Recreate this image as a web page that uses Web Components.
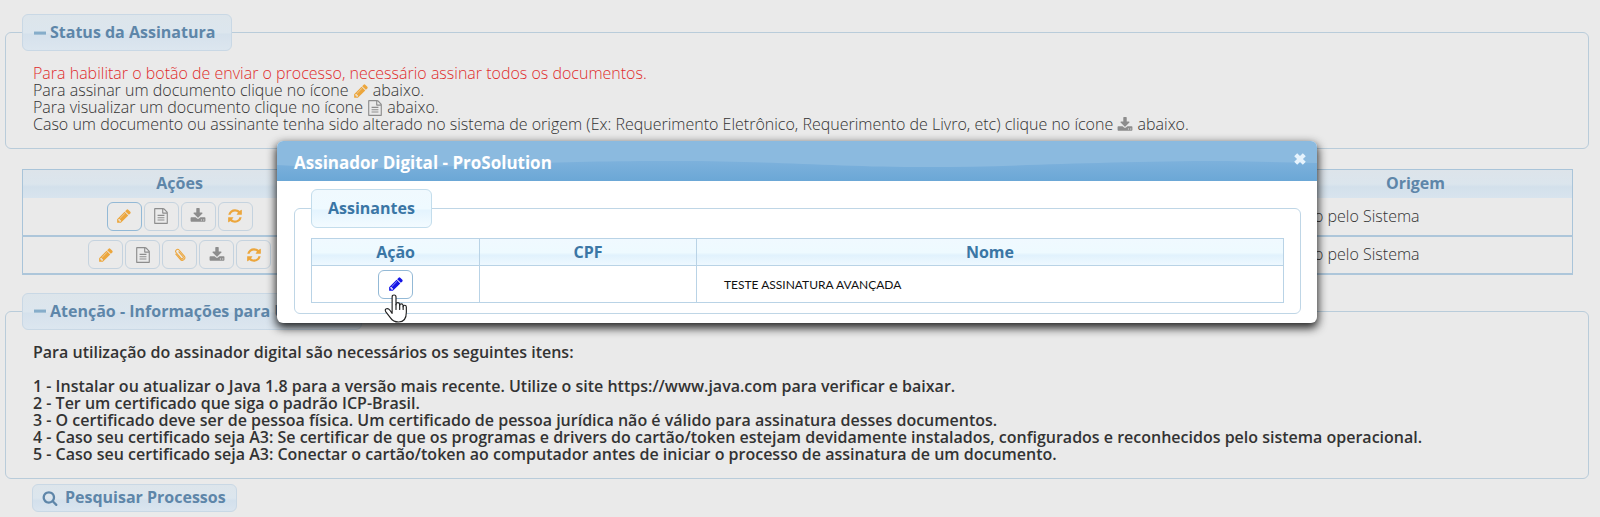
<!DOCTYPE html>
<html lang="pt-BR">
<head>
<meta charset="utf-8">
<title>Assinador Digital</title>
<style>
	body {
		margin: 0;
		background-color: #eaeaea;
		color: #333;
		font: 300 16px/17px "Open Sans", sans-serif;
	}
</style>
</head>
<body>
<signature-page></signature-page>

<script>
const icons = {
	pencil: '<path d="M491 1536l91-91-235-235-91 91v107h128v128h107zM1014 608q0-22-22-22-10 0-17 7l-542 542q-7 7-7 17 0 22 22 22 10 0 17-7l542-542q7-7 7-17zM960 416l416 416-832 832h-416v-416zM1643 512q0 53-37 90l-166 166-416-416 166-165q36-38 90-38 53 0 91 38l235 234q37 39 37 91z"/>',
	file: '<path d="M1596 380q28 28 48 76t20 88v1152q0 40-28 68t-68 28h-1344q-40 0-68-28t-28-68v-1600q0-40 28-68t68-28h896q40 0 88 20t76 48zm-444-244v376h376q-10-29-22-41l-313-313q-12-12-41-22zm384 1528v-1024h-416q-40 0-68-28t-28-68v-416h-768v1536h1280zM512 768h768v128h-768zM512 1024h768v128h-768zM512 1280h768v128h-768z"/>',
	download: '<path d="M1344 1344q0-26-19-45t-45-19-45 19-19 45 19 45 45 19 45-19 19-45zm256 0q0-26-19-45t-45-19-45 19-19 45 19 45 45 19 45-19 19-45zm128-224v320q0 40-28 68t-68 28h-1472q-40 0-68-28t-28-68v-320q0-40 28-68t68-28h465l135 136q58 56 136 56t136-56l136-136h464q40 0 68 28t28 68zm-325-569q17 41-14 70l-448 448q-18 19-45 19t-45-19l-448-448q-31-29-14-70 17-39 59-39h256v-448q0-26 19-45t45-19h256q26 0 45 19t19 45v448h256q42 0 59 39z"/>',
	refresh: '<path d="M1639 1056q0 5-1 7-64 268-268 434.500t-478 166.500q-146 0-282.500-55t-243.500-157l-129 129q-19 19-45 19t-45-19-19-45v-448q0-26 19-45t45-19h448q26 0 45 19t19 45-19 45l-137 137q71 66 161 102t187 36q134 0 250-65t186-179q11-17 53-117 8-23 30-23h192q13 0 22.500 9.500t9.500 22.500zm25-800v448q0 26-19 45t-45 19h-448q-26 0-45-19t-19-45 19-45l138-138q-148-137-349-137-134 0-250 65t-186 179q-11 17-53 117-8 23-30 23h-199q-13 0-22.500-9.500t-9.500-22.500v-7q65-268 270-434.500t480-166.500q146 0 284 55.500t245 156.500l130-129q19-19 45-19t45 19 19 45z"/>',
	search: '<path d="M1216 832q0-185-131.500-316.500t-316.500-131.500-316.500 131.500-131.500 316.500 131.500 316.500 316.500 131.500 316.500-131.500 131.500-316.500zm512 832q0 52-38 90t-90 38q-54 0-90-38l-343-342q-179 124-399 124-143 0-273.500-55.500t-225-150-150-225-55.500-273.500 55.500-273.500 150-225 225-150 273.500-55.500 273.500 55.500 225 150 150 225 55.500 273.500q0 220-124 399l343 343q37 37 37 90z"/>',
	clip: '<g fill="none" stroke="currentColor" stroke-width="120" stroke-linecap="round" transform="rotate(-40 896 896)"><path d="M600 520v780a290 270 0 0 0 580 0v-900a220 210 0 0 0-440 0v860a145 140 0 0 0 290 0v-720"/></g>',
	minus: '<path d="M0 680h1792v460h-1792z"/>',
	close: '<path d="M580 250L896 566l316-316 330 330-316 316 316 316-330 330-316-316-316 316-330-330 316-316-316-316z"/>'
};

// Icon taken by name, sized and coloured by its user
class UiIcon extends HTMLElement {
	connectedCallback() {
		const shadowRoot = this.attachShadow({ mode: 'open' });
		shadowRoot.innerHTML = `
<style>
	:host {
		display: inline-block;
		width: 16px;
		height: 16px;
		vertical-align: -3px;
	}
	:host([tone="orange"]) { color: #eca63c; }
	:host([tone="grey"]) { color: #8d8d8d; }
	:host([tone="blue"]) { color: #1414e6; }
	svg {
		display: block;
		width: 100%;
		height: 100%;
	}
</style>
<svg viewBox="0 0 1792 1792" fill="currentColor" aria-hidden="true">${icons[this.getAttribute('name')]}</svg>`;
	}
}

// Square button with a single icon in it
class IconButton extends HTMLElement {
	connectedCallback() {
		const shadowRoot = this.attachShadow({ mode: 'open' });
		shadowRoot.innerHTML = `
<style>
	:host { display: block; }
	button {
		display: flex;
		align-items: center;
		justify-content: center;
		box-sizing: border-box;
		width: 35px;
		height: 29px;
		padding: 0;
		border: 1px solid #c5d3df;
		border-radius: 6px;
		background: transparent;
		cursor: pointer;
	}
	:host([active]) button { border-color: #93b9d6; }
</style>
<button type="button" aria-label="${this.getAttribute('label')}">
	<ui-icon name="${this.getAttribute('icon')}" tone="${this.getAttribute('tone')}"></ui-icon>
</button>`;
	}
}

const panelTemplate = document.createElement('template');

panelTemplate.innerHTML = `
<style>
	:host { display: block; }
	fieldset {
		min-width: 0;
		margin: 0;
		padding: 0 16px;
		border: 1px solid var(--panel-border, #b9ccda);
		border-radius: 6px;
	}
	legend {
		display: flex;
		align-items: center;
		gap: 4px;
		padding: 9px 16px 9px 11px;
		border: 1px solid var(--legend-border, #c9d8e5);
		border-radius: 6px;
		background: var(--legend-fill, linear-gradient(#dde5eb, #dce6ee 50%, #d5e1ec 55%, #dce6ef));
		color: var(--heading, #5e86a9);
		font-weight: bold;
	}
	ui-icon {
		width: 12px;
		height: 12px;
		color: #86adca;
	}
	.content { padding: 14px 11px 15px; }
	:host([plain]) ui-icon { display: none; }
	:host([plain]) legend { padding: 10px 16px; }
	:host([plain]) .content { padding: 10px 0; }
</style>
<fieldset>
	<legend><ui-icon name="minus"></ui-icon><slot name="title"></slot></legend>
	<div class="content"><slot></slot></div>
</fieldset>
`;

class FieldPanel extends HTMLElement {
	connectedCallback() {
		const shadowRoot = this.attachShadow({ mode: 'open' });
		shadowRoot.appendChild(panelTemplate.content.cloneNode(true));
	}
}

class DocumentTable extends HTMLElement {
	connectedCallback() {
		const shadowRoot = this.attachShadow({ mode: 'open' });
		const sign = '<icon-button icon="pencil" tone="orange" label="Assinar"></icon-button>';
		const view = '<icon-button icon="file" tone="grey" label="Visualizar"></icon-button>';
		const attach = '<icon-button icon="clip" tone="orange" label="Anexos"></icon-button>';
		const rest = `<icon-button icon="download" tone="grey" label="Baixar"></icon-button>
			<icon-button icon="refresh" tone="orange" label="Atualizar"></icon-button>`;
		const row = (buttons) => `
	<tr>
		<td><div class="actions">${buttons}</div></td>
		<td></td><td></td><td></td>
		<td>Inserido pelo Sistema</td>
	</tr>`;

		shadowRoot.innerHTML = `
<style>
	:host { display: block; }
	table {
		width: 100%;
		table-layout: fixed;
		border-collapse: collapse;
		border: 1px solid #a9c4d9;
	}
	thead tr {
		height: 28px;
		background: linear-gradient(#dde4ea, #dbe5ed 50%, #d3e0eb 60%, #d8e4ee);
		color: #5e86a9;
	}
	th { padding: 0; }
	th:first-child, th:last-child { width: 20.2%; }
	tbody tr { height: 38px; }
	tbody td {
		padding: 0 6px;
		border-bottom: 2px solid #adc6da;
	}
	.actions {
		display: flex;
		justify-content: center;
		gap: 2px;
	}
</style>
<table>
	<thead>
		<tr><th>Ações</th><th></th><th></th><th></th><th>Origem</th></tr>
	</thead>
	<tbody>
		${row(sign.replace('<icon-button', '<icon-button active') + view + rest)}
		${row(sign + view + attach + rest)}
	</tbody>
</table>`;
	}
}

class SignerTable extends HTMLElement {
	connectedCallback() {
		const shadowRoot = this.attachShadow({ mode: 'open' });
		shadowRoot.innerHTML = `
<style>
	:host { display: block; }
	table {
		width: 100%;
		table-layout: fixed;
		border-collapse: collapse;
	}
	th, td {
		padding: 0;
		border: 1px solid #b9d3e6;
	}
	thead tr {
		height: 27px;
		background: linear-gradient(#f0f9ff, #eefaff 50%, #e1f2fd 60%, #eff9ff);
		color: #3a76a5;
	}
	th:nth-child(1) { width: 17.2%; }
	th:nth-child(2) { width: 22.2%; }
	tbody tr { height: 37px; }
	.action {
		position: relative;
		display: flex;
		justify-content: center;
	}
	.name {
		padding-left: 27px;
		color: #111;
		font: 12px/17px Lato, sans-serif;
	}
	/* Pointer lies over the button */
	.pointer {
		position: absolute;
		top: 24px;
		left: 50%;
		width: 24px;
		height: 29px;
		margin-left: -12px;
	}
</style>
<table>
	<thead>
		<tr><th>Ação</th><th>CPF</th><th>Nome</th></tr>
	</thead>
	<tbody>
		<tr>
			<td>
				<div class="action">
					<icon-button active icon="pencil" tone="blue" label="Assinar"></icon-button>
					<svg class="pointer" viewBox="0 0 24 30" fill="#fff" stroke="#222" stroke-width="1.200" stroke-linejoin="round" stroke-linecap="round" aria-hidden="true">
						<path d="M8 20V3q0-2 2-2t2 2v8q0-2 1.800-2t2 2v1q0-1.800 1.700-1.800t1.900 2v1q0-1.600 1.600-1.600t1.700 2V19q0 10-8 10Q9 29 6.500 25L1.500 18.500Q0 16 2.200 15.300q2-.5 3.500 1.500z"/>
						<path d="M12 11v5M15.800 12v4M19.400 13v3" fill="none"/>
					</svg>
				</div>
			</td>
			<td></td>
			<td><div class="name">TESTE ASSINATURA AVANÇADA</div></td>
		</tr>
	</tbody>
</table>`;
	}
}

const dialogTemplate = document.createElement('template');

dialogTemplate.innerHTML = `
<style>
	:host {
		--panel-border: #bfd6e6;
		--legend-border: #c3ddec;
		--legend-fill: linear-gradient(#f0f9fe, #effaff 50%, #e4f4fe 55%, #f3fbff);
		--heading: #3a76a5;
		display: block;
	}
	section {
		overflow: hidden;
		border-radius: 6px;
		background-color: white;
		box-shadow: 0 4px 10px 1px rgba(0, 0, 0, 0.85);
	}
	header {
		position: relative;
		display: flex;
		align-items: center;
		justify-content: space-between;
		height: 40px;
		padding: 0 9px 0 17px;
		background-color: #8bbadf;
		color: white;
	}
	.wave {
		position: absolute;
		top: 0;
		left: 0;
		width: 100%;
		height: 100%;
	}
	h2 {
		position: relative;
		margin: 4px 0 0;
		font-size: 17px;
		line-height: 20px;
	}
	button {
		position: relative;
		display: flex;
		margin: 0 0 4px;
		padding: 0;
		border: 0;
		background: none;
		color: #e6f3fd;
		cursor: pointer;
	}
	.body { padding: 8px 16px 9px 17px; }
</style>
<section role="dialog" aria-labelledby="title">
	<header>
		<svg class="wave" viewBox="0 0 1040 40" preserveAspectRatio="none" aria-hidden="true">
			<defs>
				<linearGradient id="fill" x1="0" y1="0" x2="0" y2="1">
					<stop offset="0" stop-color="#7db1dc"/>
					<stop offset="1" stop-color="#6ba7d6"/>
				</linearGradient>
			</defs>
			<path fill="url(#fill)" d="M0 24Q70 28 150 26C260 22 300 20 400 20S560 26 650 26 820 20 950 20L1040 22V40H0z"/>
		</svg>
		<h2 id="title"><slot name="title"></slot></h2>
		<button type="button" aria-label="Fechar"><ui-icon name="close"></ui-icon></button>
	</header>
	<div class="body"><slot></slot></div>
</section>
`;

class ModalDialog extends HTMLElement {
	connectedCallback() {
		const shadowRoot = this.attachShadow({ mode: 'open' });
		shadowRoot.appendChild(dialogTemplate.content.cloneNode(true));
	}
}

const pageTemplate = document.createElement('template');

pageTemplate.innerHTML = `
<style>
	:host {
		position: relative;
		display: block;
		padding: 14px 11px 6px 5px;
	}
	p { margin: 0; }
	.warning { color: #e02c2c; }
	.steps {
		color: #333;
		font-weight: 600;
	}
	.steps ol {
		margin: 17px 0 0;
		padding: 0;
		list-style: none;
	}
	document-table { margin: 20px 16px 18px 17px; }
	.search {
		display: flex;
		align-items: center;
		gap: 7px;
		height: 28px;
		margin: 5px 0 0 27px;
		padding: 0 10px 0 9px;
		border: 1px solid #c9d8e5;
		border-radius: 6px;
		background: linear-gradient(#dde5eb, #dce6ee 50%, #d3e0ec 60%, #dae5ef);
		color: #5e86a9;
		font: bold 16px/17px "Open Sans", sans-serif;
		cursor: pointer;
	}
	/* Stays over the page, centred on it */
	modal-dialog {
		position: absolute;
		top: 141px;
		left: 0;
		right: 6px;
		width: 65%;
		margin: 0 auto;
		z-index: 1000;
	}
</style>

<field-panel>
	<span slot="title">Status da Assinatura</span>
	<p class="warning">Para habilitar o botão de enviar o processo, necessário assinar todos os documentos.</p>
	<p>Para assinar um documento clique no ícone <ui-icon name="pencil" tone="orange"></ui-icon> abaixo.</p>
	<p>Para visualizar um documento clique no ícone <ui-icon name="file" tone="grey"></ui-icon> abaixo.</p>
	<p>Caso um documento ou assinante tenha sido alterado no sistema de origem (Ex: Requerimento Eletrônico, Requerimento de Livro, etc) clique no ícone <ui-icon name="download" tone="grey"></ui-icon> abaixo.</p>
</field-panel>

<document-table></document-table>

<field-panel>
	<span slot="title">Atenção - Informações para Usuários</span>
	<div class="steps">
		<p>Para utilização do assinador digital são necessários os seguintes itens:</p>
		<ol>
			<li>1 - Instalar ou atualizar o Java 1.8 para a versão mais recente. Utilize o site https://www.java.com para verificar e baixar.</li>
			<li>2 - Ter um certificado que siga o padrão ICP-Brasil.</li>
			<li>3 - O certificado deve ser de pessoa física. Um certificado de pessoa jurídica não é válido para assinatura desses documentos.</li>
			<li>4 - Caso seu certificado seja A3: Se certificar de que os programas e drivers do cartão/token estejam devidamente instalados, configurados e reconhecidos pelo sistema operacional.</li>
			<li>5 - Caso seu certificado seja A3: Conectar o cartão/token ao computador antes de iniciar o processo de assinatura de um documento.</li>
		</ol>
	</div>
</field-panel>

<button type="button" class="search"><ui-icon name="search"></ui-icon>Pesquisar Processos</button>

<modal-dialog>
	<span slot="title">Assinador Digital - ProSolution</span>
	<field-panel plain>
		<span slot="title">Assinantes</span>
		<signer-table></signer-table>
	</field-panel>
</modal-dialog>
`;

class SignaturePage extends HTMLElement {
	connectedCallback() {
		const shadowRoot = this.attachShadow({ mode: 'open' });
		shadowRoot.appendChild(pageTemplate.content.cloneNode(true));
	}
}

customElements.define('ui-icon', UiIcon);
customElements.define('icon-button', IconButton);
customElements.define('field-panel', FieldPanel);
customElements.define('document-table', DocumentTable);
customElements.define('signer-table', SignerTable);
customElements.define('modal-dialog', ModalDialog);
customElements.define('signature-page', SignaturePage);
</script>
</body>
</html>
